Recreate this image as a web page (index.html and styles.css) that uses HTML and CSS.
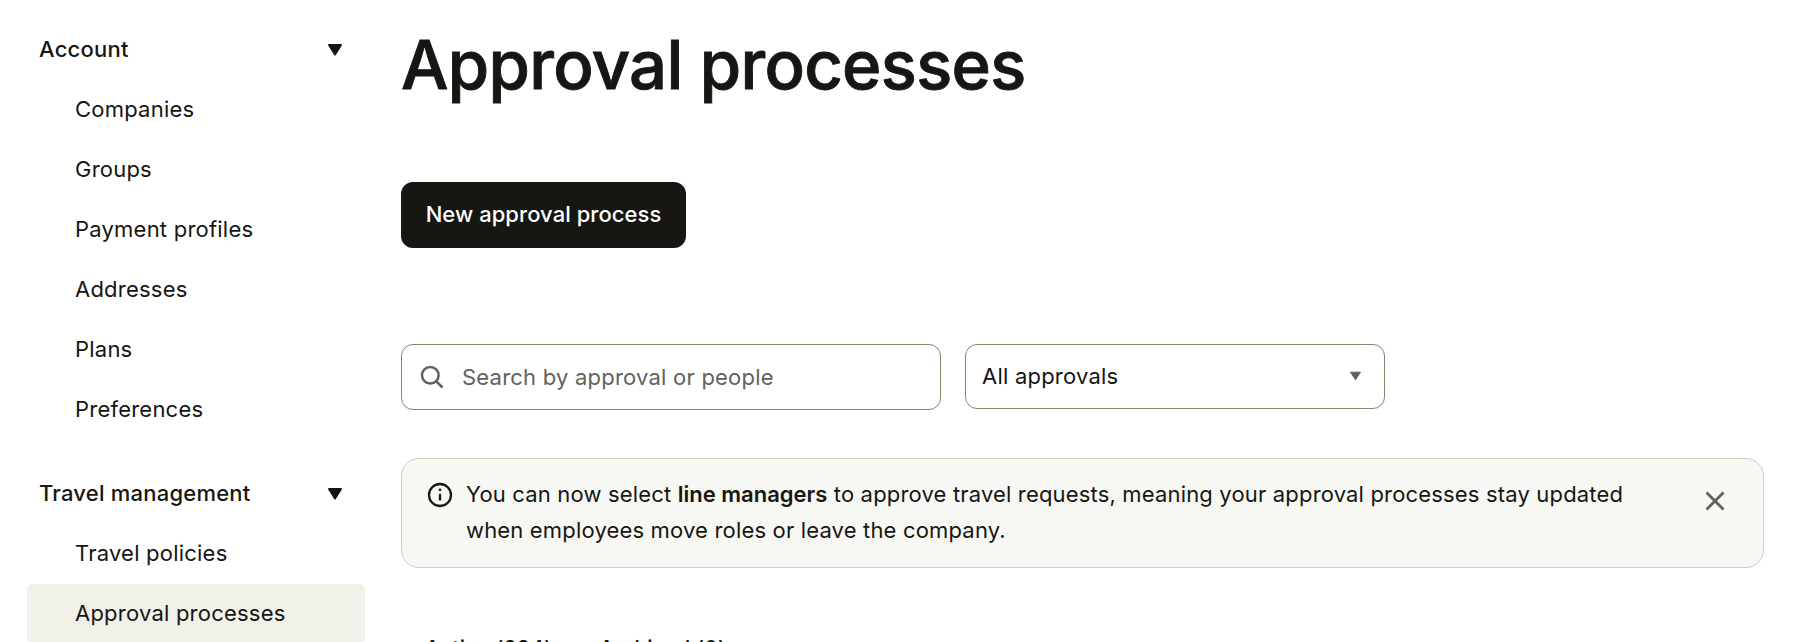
FILE: index.html
```html
<!DOCTYPE html>
<html lang="en">
<head>
    <meta charset="UTF-8">
    <title>Approval processes</title>
    <link rel="stylesheet" href="styles.css">
</head>
<body>

<div class="layout">
    <nav class="sidebar">
        <div class="nav-heading">
            <span>Account</span>
            <svg class="caret" width="16" height="13" viewBox="0 0 16 13"><path d="M2 2h12L8 11.5z"/></svg>
        </div>
        <a class="nav-link" href="#">Companies</a>
        <a class="nav-link" href="#">Groups</a>
        <a class="nav-link" href="#">Payment profiles</a>
        <a class="nav-link" href="#">Addresses</a>
        <a class="nav-link" href="#">Plans</a>
        <a class="nav-link" href="#">Preferences</a>

        <div class="nav-heading nav-heading-second">
            <span>Travel management</span>
            <svg class="caret" width="16" height="13" viewBox="0 0 16 13"><path d="M2 2h12L8 11.5z"/></svg>
        </div>
        <a class="nav-link" href="#">Travel policies</a>
        <a class="nav-link active" href="#">Approval processes</a>
    </nav>

    <main class="content">
        <h1>Approval processes</h1>

        <button class="primary-btn">New approval process</button>

        <div class="filters">
            <div class="search-box">
                <svg width="24" height="24" viewBox="0 0 24 24" fill="none" stroke="#62625a" stroke-width="2.5"><circle cx="10.3" cy="10.3" r="8.3"/><path d="M16.3 16.3l6.2 6.2"/></svg>
                <span>Search by approval or people</span>
            </div>
            <div class="select-box">
                <span>All approvals</span>
                <svg class="select-caret" width="13" height="10" viewBox="0 0 13 10"><path d="M1.5 1.2h10L6.5 8.8z"/></svg>
            </div>
        </div>

        <div class="notice">
            <svg class="notice-icon" width="26" height="26" viewBox="0 0 26 26" fill="none" stroke="#161612" stroke-width="2.3"><circle cx="13" cy="13" r="11"/><path d="M13 11.8v6.7"/><circle cx="13" cy="7.8" r="1.4" fill="#161612" stroke="none"/></svg>
            <p>You can now select <strong>line managers</strong> to approve travel requests, meaning your approval processes stay updated when employees move roles or leave the company.</p>
            <svg class="notice-close" width="20" height="20" viewBox="0 0 20 20" fill="none" stroke="#62625a" stroke-width="2.8"><path d="M1.5 1.5l17 17M18.5 1.5l-17 17"/></svg>
        </div>

        <div class="tabs">
            <a href="#">Active (334)</a>
            <a href="#">Archived (0)</a>
        </div>
    </main>
</div>

</body>
</html>
```

FILE: styles.css
```css
html, body {
    height: 100%;
    overflow: hidden;
}

body {
    font-family: Inter, "Noto Sans", sans-serif;
    margin: 0;
    padding: 0;
    background-color: #fff;
    color: #161612;
    letter-spacing: 0.22px;
}

.layout {
    display: flex;
    align-items: flex-start;
    padding-left: 27px;
}

.sidebar {
    display: flex;
    flex-direction: column;
    width: 338px;
    padding-top: 20px;
    flex-shrink: 0;
}

.nav-heading {
    display: flex;
    justify-content: space-between;
    align-items: center;
    box-sizing: border-box;
    height: 60px;
    padding: 0 22px 2px 12px;
    font-size: 22px;
    font-weight: 500;
}

.nav-heading-second {
    margin-top: 24px;
}

.caret {
    fill: #161612;
    stroke: #161612;
    stroke-width: 2;
    stroke-linejoin: round;
}

.nav-link {
    display: flex;
    align-items: center;
    box-sizing: border-box;
    height: 60px;
    padding: 0 0 2px 48px;
    font-size: 22px;
    color: #161612;
    text-decoration: none;
    border-radius: 6px;
}

.nav-link.active {
    background-color: #f1f1e9;
}

.content {
    flex: 1;
    margin-left: 36px;
    margin-right: 35px;
}

h1 {
    margin: 20px 0 0;
    font-size: 67px;
    line-height: 90px;
    font-weight: 500;
    letter-spacing: -0.7px;
    -webkit-text-stroke: 0.9px #161612;
}

.primary-btn {
    display: block;
    margin-top: 72px;
    width: 285px;
    height: 66px;
    padding: 0 0 2px;
    border: none;
    border-radius: 12px;
    background-color: #161612;
    color: #fff;
    font-family: inherit;
    font-size: 22px;
    font-weight: 500;
    letter-spacing: 0.05px;
}

.filters {
    display: flex;
    align-items: flex-start;
    gap: 24px;
    margin-top: 96px;
}

.search-box, .select-box {
    display: flex;
    align-items: center;
    box-sizing: border-box;
    border: 1px solid #84846f;
    border-radius: 12px;
    font-size: 22px;
}

.search-box {
    width: 540px;
    height: 66px;
    padding: 0 0 1px 18px;
    gap: 18px;
    color: #62625a;
}

.select-box {
    justify-content: space-between;
    width: 420px;
    height: 65px;
    padding: 0 22px 1px 16px;
}

.select-caret {
    fill: #62625a;
    stroke: #62625a;
    stroke-width: 1;
    stroke-linejoin: round;
}

.notice {
    display: flex;
    align-items: flex-start;
    box-sizing: border-box;
    height: 110px;
    margin-top: 48px;
    padding: 17px 38px 0 25px;
    background-color: #f7f8f3;
    border: 1px solid #cfcfc1;
    border-radius: 18px;
}

.notice p {
    flex: 1;
    margin: 0 0 0 13px;
    max-width: 1180px;
    font-size: 22px;
    line-height: 36px;
    letter-spacing: 0.17px;
}

.notice strong {
    font-weight: 600;
    letter-spacing: 0;
}

.notice-icon {
    margin-top: 6px;
    flex-shrink: 0;
}

.notice-close {
    margin-top: 15px;
    margin-left: auto;
    flex-shrink: 0;
}

.tabs {
    display: flex;
    gap: 47px;
    margin-top: 68px;
    padding-left: 24px;
}

.tabs a {
    font-size: 21px;
    font-weight: 500;
    color: #161612;
    text-decoration: none;
}
```
